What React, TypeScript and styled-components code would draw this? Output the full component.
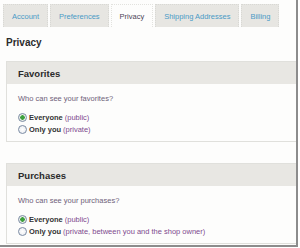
import React from 'react'
import styled, { createGlobalStyle } from 'styled-components'

const Global = createGlobalStyle`
  html, body {
    margin: 0;
    padding: 0;
    background: #ffffff;
  }
  body {
    font-family: "Liberation Sans", Arial, sans-serif;
  }
`

type Option = { label: string; note: string; checked?: boolean }
type Section = { title: string; question: string; options: Option[] }

const tabs = ['Account', 'Preferences', 'Privacy', 'Shipping Addresses', 'Billing']

const sections: Section[] = [
  {
    title: 'Favorites',
    question: 'Who can see your favorites?',
    options: [
      { label: 'Everyone', note: '(public)', checked: true },
      { label: 'Only you', note: '(private)' },
    ],
  },
  {
    title: 'Purchases',
    question: 'Who can see your purchases?',
    options: [
      { label: 'Everyone', note: '(public)', checked: true },
      { label: 'Only you', note: '(private, between you and the shop owner)' },
    ],
  },
]

const App = () => {
  return (
    <>
      <Global />
      <Frame>
        <Tabs>
          {tabs.map((t) => (
            <Tab key={t} $active={t === 'Privacy'}>{t}</Tab>
          ))}
        </Tabs>
        <Heading>Privacy</Heading>
        {sections.map((s) => (
          <Panel key={s.title}>
            <PanelHeader>{s.title}</PanelHeader>
            <PanelBody>
              <Question>{s.question}</Question>
              {s.options.map((o) => (
                <Row key={o.label}>
                  <Radio $checked={o.checked} />
                  <Label>{o.label}</Label>
                  <Note>{o.note}</Note>
                </Row>
              ))}
            </PanelBody>
          </Panel>
        ))}
      </Frame>
    </>
  )
}

export default App

const Frame = styled.div`
  width: 296px;
  height: 245px;
  border-right: 2px solid #8c8c8c;
  border-bottom: 2px solid #8c8c8c;
  background: #fdfdfc;
  overflow: hidden;
`
const Tabs = styled.div`
  display: flex;
  gap: 2px;
  padding: 4px 0 0 3px;
`
const Tab = styled.div<{ $active?: boolean }>`
  height: 23px;
  padding: 0 8px;
  display: flex;
  align-items: center;
  box-sizing: border-box;
  font-size: 7.5px;
  color: ${(p) => (p.$active ? '#4d4457' : '#4a9bc6')};
  background: ${(p) => (p.$active ? '#fdfdfc' : '#e7e6e2')};
  border: 1px dotted ${(p) => (p.$active ? '#e2e2de' : '#d8d8d4')};
  border-bottom: none;
`
const Heading = styled.h1`
  margin: 10px 0 0 6px;
  font-size: 10px;
  line-height: 12px;
  font-weight: bold;
  color: #2b2b2b;
`
const Panel = styled.div`
  margin: 12px 0 21px 6px;
  width: 289px;
  border: 1px solid #e0e0dc;
  border-right: none;
`
const PanelHeader = styled.div`
  height: 22px;
  display: flex;
  align-items: center;
  padding-left: 11px;
  background: #e8e7e3;
  font-size: 9.5px;
  font-weight: bold;
  color: #2b2b2b;
`
const PanelBody = styled.div`
  padding: 10px 0 5px 11px;
`
const Question = styled.div`
  font-size: 7.5px;
  line-height: 10px;
  color: #6e6179;
  margin-bottom: 7px;
`
const Row = styled.div`
  display: flex;
  align-items: center;
  height: 12.5px;
  font-size: 7.5px;
`
const Radio = styled.span<{ $checked?: boolean }>`
  width: 9px;
  height: 9px;
  box-sizing: border-box;
  border-radius: 50%;
  border: 1px solid #7b8ba3;
  background: radial-gradient(circle, ${(p) => (p.$checked ? '#3ea03e 0 2px, #e9efe9 2.5px' : '#ffffff 0, #e6e9ee 100%')});
  margin-right: 2px;
  flex-shrink: 0;
`
const Label = styled.span`
  font-weight: bold;
  color: #333333;
  margin-right: 2px;
`
const Note = styled.span`
  color: #7d4a8e;
`
